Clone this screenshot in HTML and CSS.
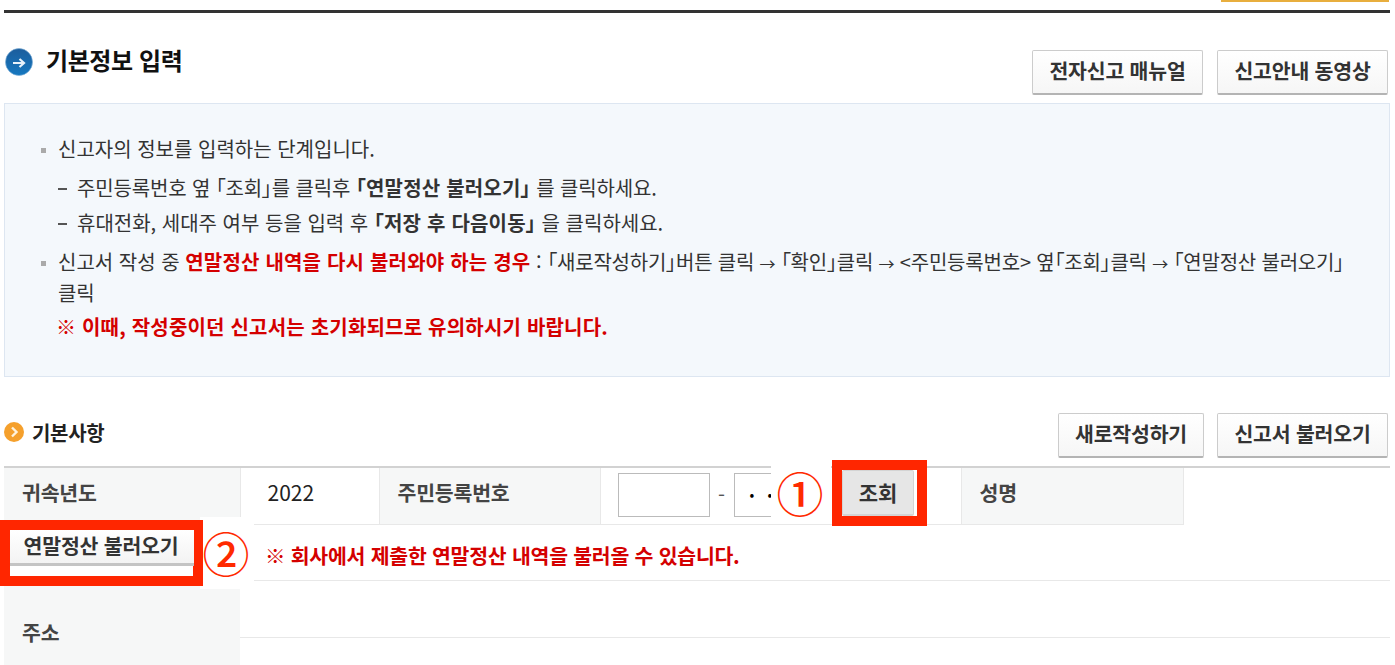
FILE: index.html
```html
<!DOCTYPE html>
<html lang="ko">
<head>
<meta charset="utf-8">
<title>기본정보 입력</title>
<link rel="stylesheet" href="styles.css">
</head>
<body>
<div class="page">
  <div class="topbar"><span class="top-tab"></span></div>
  <header class="title-row">
    <h1 class="title">
      <svg class="icon-blue" viewBox="0 0 28 28" aria-hidden="true">
        <defs><linearGradient id="b" x1="0" y1="0" x2="0" y2="1"><stop offset="0" stop-color="#1c5d9c"/><stop offset="1" stop-color="#1678c0"/></linearGradient></defs>
        <circle cx="14" cy="14" r="13.5" fill="url(#b)" stroke="#7fb0d8" stroke-width="0.6"/>
        <path d="M8 15h11M14.500 11l4.500 4-4.500 4" fill="none" stroke="#e8f2fa" stroke-width="2.200"/>
      </svg>
      <span class="title-text">기본정보 입력</span>
    </h1>
    <div class="btns">
      <button class="btn">전자신고 매뉴얼</button>
      <button class="btn">신고안내 동영상</button>
    </div>
  </header>

  <section class="info">
    <p class="l1 bullet">신고자의 정보를 입력하는 단계입니다.</p>
    <p class="l2 dash">주민등록번호 옆 「조회」를 클릭후 <b>「연말정산 불러오기」</b> 를 클릭하세요.</p>
    <p class="l3 dash">휴대전화, 세대주 여부 등을 입력 후 <b>「저장 후 다음이동」</b> 을 클릭하세요.</p>
    <p class="l4 bullet">신고서 작성 중 <b class="red">연말정산 내역을 다시 불러와야 하는 경우</b> : <span class="tail">「새로작성하기」버튼 클릭 <span class="arr">→</span> 「확인」클릭 <span class="arr">→</span> &lt;주민등록번호&gt; 옆「조회」클릭 <span class="arr">→</span> <span class="nb">「연말정산 불러오기」</span> 클릭</span></p>
    <p class="l5"><b class="red">※ 이때, 작성중이던 신고서는 초기화되므로 유의하시기 바랍니다.</b></p>
  </section>

  <div class="sub-row">
    <h2 class="subtitle">
      <svg class="icon-orange" viewBox="0 0 20 20" aria-hidden="true">
        <circle cx="10" cy="10" r="10" fill="#f5a02c"/>
        <path d="M8 5.500 12.500 10 8 14.500" fill="none" stroke="#fff3dc" stroke-width="2.400"/>
      </svg>
      기본사항
    </h2>
    <div class="btns">
      <button class="btn">새로작성하기</button>
      <button class="btn">신고서 불러오기</button>
    </div>
  </div>

  <div class="table-wrap">
    <table class="form">
      <colgroup>
        <col class="c1"><col class="c2"><col class="c3"><col class="c4"><col class="c5"><col class="c6">
      </colgroup>
      <tr class="r1">
        <th>귀속년도</th>
        <td class="year">2022</td>
        <th>주민등록번호</th>
        <td class="rrn"><span class="field"></span><span class="hy">-</span><span class="field f2">• •</span></td>
        <th>성명</th>
        <td class="plain"></td>
      </tr>
      <tr class="r2"><th></th><td colspan="5"></td></tr>
      <tr class="r3"><th rowspan="2" class="addr">주소</th><td colspan="5"></td></tr>
      <tr class="r4"><td colspan="5" class="open"></td></tr>
    </table>

    <div class="mask-one"><span class="num">①</span></div>
    <div class="mark-lookup"><button class="btn-gray">조회</button></div>
    <div class="mask-two"><span class="num">②</span></div>
    <div class="mark-load"><button class="btn-load">연말정산 불러오기</button></div>
    <p class="notice">※ 회사에서 제출한 연말정산 내역을 불러올 수 있습니다.</p>
  </div>
</div>
</body>
</html>
```

FILE: styles.css
```css
* { box-sizing: border-box; }
html, body { margin: 0; padding: 0; background: #fff; height: 665px; overflow: hidden; }
body { font-family: "Noto Sans CJK KR", "Noto Sans", sans-serif; color: #333; }
.page { width: 1386px; margin-left: 4px; }
p, h1, h2 { margin: 0; }

.topbar { height: 13px; border-bottom: 3px solid #333; display: flex; justify-content: flex-end; padding-right: 1px; }
.top-tab { width: 168px; height: 2px; background: #e8ae3e; }

.title-row { display: flex; justify-content: space-between; height: 90px; padding-top: 37px; }
.title { display: flex; align-items: center; gap: 13px; height: 27px; margin-top: -2px; font-size: 24px; font-weight: 700; color: #111; line-height: 27px; letter-spacing: -0.4px; }
.title-text { padding-bottom: 4px; }
.icon-blue { width: 28px; height: 28px; margin-left: 1px; }

.btns { display: flex; gap: 14px; padding-right: 2px; }
.btn { height: 45px; padding: 0 0 4px; border: 1px solid #ccc; border-bottom: 2px solid #b4b4b4; border-radius: 2px; background: linear-gradient(#fff, #f6f6f6); font: 700 20.500px/1 "Noto Sans CJK KR", sans-serif; color: #333; letter-spacing: -0.2px; }
.title-row .btn { width: 171px; }
.sub-row .btns { gap: 13px; }
.sub-row .btn:first-child { width: 146px; }
.sub-row .btn:last-child { width: 171px; }

.info { height: 274px; background: #f4f8fc; border: 1px solid #dde6f1; padding: 30px 30px 0 53px; font-size: 20px; line-height: 30px; color: #333; font-feature-settings: "palt"; word-break: keep-all; }
.info b { font-weight: 700; letter-spacing: 0.2px; }
.red { color: #d40000; }
.info .l2 { margin-top: 9px; letter-spacing: -0.15px; }
.info .l3 { margin-top: 5px; }
.info .l4 { margin-top: 9px; }
.tail { letter-spacing: -0.2px; }
.arr { font-size: 16px; }
.nb { white-space: nowrap; }
.bullet { position: relative; }
.bullet::before { content: ""; position: absolute; left: -17px; top: 14px; width: 5px; height: 5px; background: #aaa; }
.dash { padding-left: 19px; position: relative; }
.dash::before { content: ""; position: absolute; left: 0; top: 15px; width: 9px; height: 2px; background: #555; }
.l5 { margin: 4px 0 0 -2px; }

.sub-row { display: flex; justify-content: space-between; height: 89px; padding-top: 36px; }
.subtitle { display: flex; align-items: center; gap: 8px; height: 38px; font-size: 20px; font-weight: 700; color: #222; letter-spacing: -0.3px; }
.icon-orange { width: 20px; height: 20px; }

.table-wrap { position: relative; }
.form { width: 100%; border-collapse: collapse; table-layout: fixed; border-top: 2px solid #d2d2d2; }
.c1 { width: 236px; } .c2 { width: 139px; } .c3 { width: 221px; } .c4 { width: 361px; } .c5 { width: 222px; }
.form th, .form td { border-bottom: 1px solid #e8e8e8; padding: 0; }
.form th { background: #f6f7f7; font-weight: 700; font-size: 20.500px; color: #444; text-align: left; padding-left: 18px; letter-spacing: -0.2px; }
.form .r1 th { padding-bottom: 8px; }
.form tr.r1 td { border-right: 1px solid #e8e8e8; }
.form tr.r1 th { border-right: 1px solid #e8e8e8; }
.form tr.r1 td.plain { border: 0; }
.form .addr { border-bottom: 0; padding-top: 18px; }
.form .open { border-bottom: 0; }
.r1 { height: 57px; } .r2 { height: 56px; } .r3 { height: 57px; } .r4 { height: 28px; }
.form .year { padding: 0 0 8px 27px; font-size: 21px; color: #222; }
.form .rrn { padding: 0 0 2px 17px; white-space: nowrap; }
.field { display: inline-block; vertical-align: middle; width: 92px; height: 44px; border: 1px solid #bbb; background: #fff; }
.f2 { width: 90px; font-size: 14px; line-height: 40px; padding-left: 15px; letter-spacing: 5px; color: #000; overflow: hidden; white-space: nowrap; }
.hy { display: inline-block; width: 24px; text-align: center; font-size: 20px; color: #555; vertical-align: middle; }

.mask-one { position: absolute; left: 767px; top: 0; width: 60px; height: 58px; background: #fff; display: flex; align-items: center; justify-content: center; padding: 0 2px 8px 0; }
.mask-two { position: absolute; left: 196px; top: 51px; width: 54px; height: 72px; background: #fff; display: flex; align-items: center; justify-content: center; padding: 0 2px 4px 0; }
.num { font-size: 47px; line-height: 1; color: #ff2a00; font-weight: 500; }
.mark-lookup { position: absolute; left: 828px; top: -6px; width: 95px; height: 66px; border: 10px solid #ff2600; background: #fff; }
.btn-gray { display: block; width: 72px; height: 46px; border: 1px solid #d4d4d4; border-bottom-width: 2px; border-radius: 2px; background: #e6e6e6; font: 700 21px/1 "Noto Sans CJK KR", sans-serif; color: #333; }
.mark-load { position: absolute; left: -4px; top: 54px; width: 203px; height: 66px; border: 10px solid #ff2600; background: #fff; }
.btn-load { display: block; width: 184px; height: 36px; border: 0; border-bottom: 3px solid #c4c4c4; background: linear-gradient(#fff, #f3f3f3); font: 700 20.500px/1 "Noto Sans CJK KR", sans-serif; color: #333; letter-spacing: -0.2px; padding: 0 2px 2px 0; }
.notice { position: absolute; left: 261px; top: 74px; margin: 0; font-size: 20.500px; line-height: 30px; font-weight: 700; color: #d40000; letter-spacing: -0.25px; }
```
